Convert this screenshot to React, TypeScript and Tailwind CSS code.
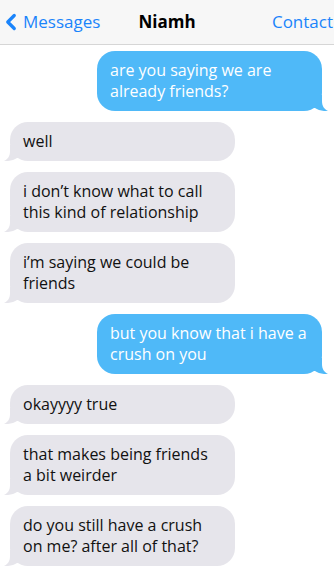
import { ChevronLeft } from "lucide-react";

type Msg = { from: "me" | "them"; text: string };

const messages: Msg[] = [
    { from: "me", text: "are you saying we are already friends?" },
    { from: "them", text: "well" },
    { from: "them", text: "i don’t know what to call this kind of relationship" },
    { from: "them", text: "i’m saying we could be friends" },
    { from: "me", text: "but you know that i have a crush on you" },
    { from: "them", text: "okayyyy true" },
    { from: "them", text: "that makes being friends\na bit weirder" },
    { from: "them", text: "do you still have a crush on me? after all of that?" },
];

function Tail({ side, color }: { side: "left" | "right"; color: string }) {
    // little hook at the bottom corner of a bubble
    if (side === "right") {
        return (
            <svg className="absolute bottom-0 right-[-6px]" width="16" height="16" viewBox="0 0 16 16">
                <path d="M0 0 H10 V6 C10 11 12 14 16 16 C11 16.5 6 15 3 13 L0 13 Z" fill={color} />
            </svg>
        );
    }
    return (
        <svg className="absolute bottom-0 left-[-6px]" width="16" height="16" viewBox="0 0 16 16">
            <path d="M16 0 H6 V6 C6 11 4 14 0 16 C5 16.5 10 15 13 13 L16 13 Z" fill={color} />
        </svg>
    );
}

function Bubble({ msg }: { msg: Msg }) {
    const mine = msg.from === "me";
    return (
        <div
            className={
                mine
                    ? "relative self-end mr-[12px] w-[225px] rounded-[18px] bg-[#4fb9f8] px-[13px] py-[9px] text-white"
                    : "relative self-start ml-[10px] w-[225px] rounded-[18px] bg-[#e6e5eb] px-[13px] py-[9px] text-[#111]"
            }
        >
            <p className="text-[16px] leading-[21px] whitespace-pre-line">{msg.text}</p>
            <Tail side={mine ? "right" : "left"} color={mine ? "#4fb9f8" : "#e6e5eb"} />
        </div>
    );
}

export default function App() {
    return (
        <div className="w-[334px] h-[581px] overflow-hidden bg-white font-['Open_Sans',sans-serif]">
            <div className="h-[45px] bg-[#f7f7f7] border-b border-[#d6d6d6] flex items-center justify-between text-[17px]">
                <div className="flex items-center text-[#1a84fb] w-[120px]">
                    <ChevronLeft className="w-[26px] h-[26px] -ml-[2px]" strokeWidth={3} />
                    <span className="-ml-[1px]">Messages</span>
                </div>
                <span className="font-bold text-black">Niamh</span>
                <div className="w-[120px] flex justify-end text-[#1a84fb] whitespace-nowrap">
                    <span className="mr-[1px]">Contact</span>
                </div>
            </div>
            <div className="flex flex-col gap-[11px] pt-[6px]">
                {messages.map((m, i) => (
                    <Bubble key={i} msg={m} />
                ))}
            </div>
        </div>
    );
}
